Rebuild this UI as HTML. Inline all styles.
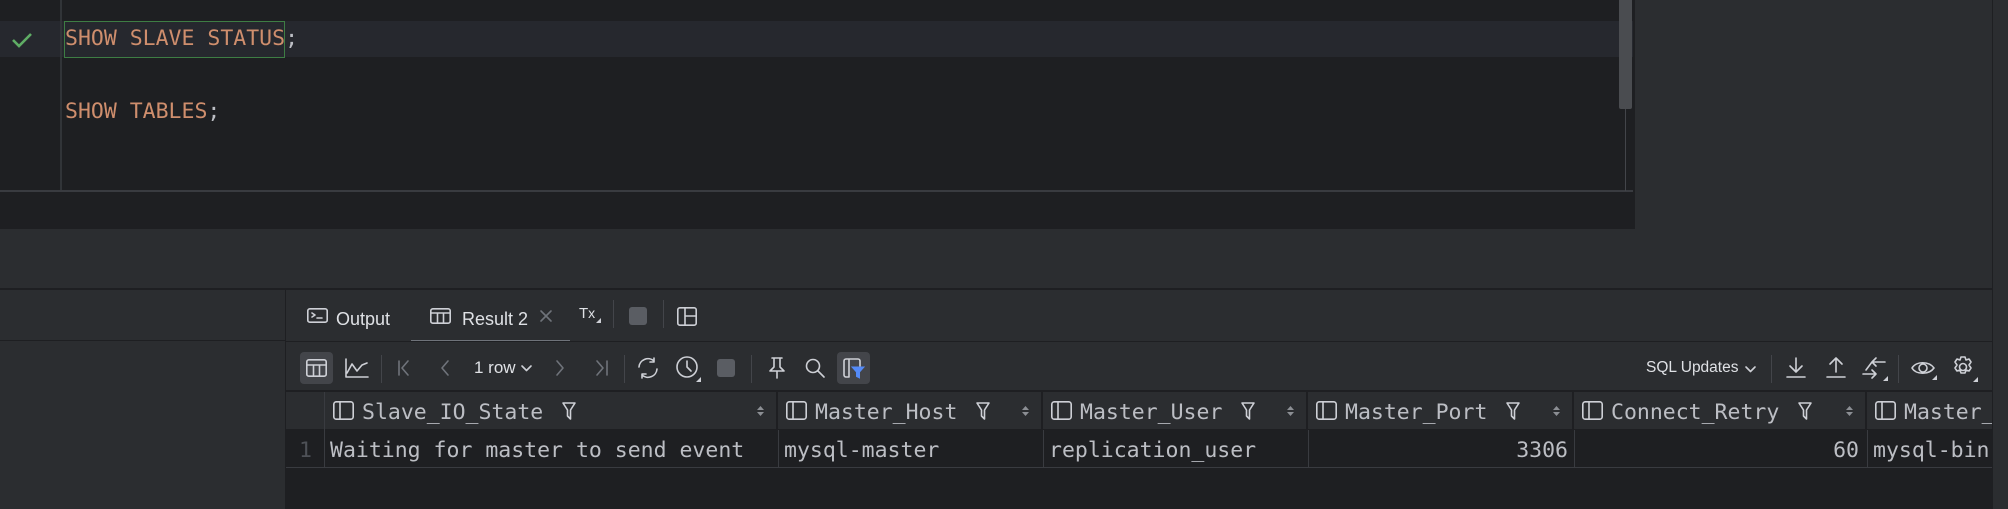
<!DOCTYPE html>
<html><head><meta charset="utf-8"><style>
*{margin:0;padding:0;box-sizing:border-box}
body{width:2008px;height:509px;background:#2b2d30;position:relative;overflow:hidden;font-family:"Liberation Sans",sans-serif}
.a{position:absolute}
.mono{font-family:"DejaVu Sans Mono","Liberation Mono",monospace;font-size:21.5px;white-space:pre;line-height:1}
.ui{font-size:18px;color:#dfe1e5;white-space:nowrap;line-height:1}
svg{position:absolute;overflow:visible}
.ic{stroke:#ced0d6;fill:none;stroke-width:1.6;stroke-linecap:round;stroke-linejoin:round}
.dim{stroke:#6f737a}
.sep{position:absolute;width:1px;background:#43454a}
.hd{position:absolute;top:392px;height:37px;border-right:2px solid #1e1f22}
.hd span{position:absolute;top:10px;left:37px;color:#bcbec4}
</style></head><body>
<!-- editor -->
<div class="a" style="left:0;top:0;width:1635px;height:229px;background:#1e1f22"></div>
<div class="a" style="left:0;top:21px;width:1633px;height:36px;background:#26282e"></div>
<div class="a" style="left:60px;top:0;width:2px;height:191px;background:#313438"></div>
<div class="a" style="left:0;top:190px;width:1633px;height:2px;background:#393b40"></div>
<div class="a" style="left:1625px;top:0;width:1px;height:191px;background:#43454a"></div>
<div class="a" style="left:1619px;top:0;width:13px;height:109px;background:#4a4c50;border-radius:0 0 2px 2px"></div>
<svg style="left:11px;top:32px" width="22" height="16"><path d="M2 8 L8 14 L20 2" stroke="#5fad65" stroke-width="2.6" fill="none"/></svg>
<div class="a" style="left:64px;top:21px;width:221px;height:37px;border:1.5px solid #3e7d44"></div>
<div class="a mono" style="left:65px;top:28px;color:#cf8e6d">SHOW SLAVE STATUS<span style="color:#bcbec4">;</span></div>
<div class="a mono" style="left:65px;top:101px;color:#cf8e6d">SHOW TABLES<span style="color:#bcbec4">;</span></div>
<!-- right panel -->
<div class="a" style="left:1635px;top:0;width:357px;height:227px;background:#2b2d30"></div>
<div class="a" style="left:1992px;top:0;width:1px;height:509px;background:#1e1f22"></div>
<!-- bottom band -->
<div class="a" style="left:0;top:229px;width:1992px;height:60px;background:#2b2d30"></div>
<div class="a" style="left:0;top:288px;width:1992px;height:2px;background:#1e1f22"></div>
<div class="a" style="left:285px;top:290px;width:1px;height:219px;background:#1e1f22"></div>
<div class="a" style="left:0;top:340px;width:285px;height:1px;background:#1e1f22"></div>
<!-- tabs -->
<svg style="left:307px;top:308px" width="21" height="15"><rect x="0.8" y="0.8" width="19.4" height="13.4" rx="2" class="ic"/><path d="M5 5l3 2-3 2M10 10h5" class="ic"/></svg>
<div class="a ui" style="left:336px;top:310px">Output</div>
<svg style="left:430px;top:308px" width="21" height="16"><rect x="0.8" y="0.8" width="19.4" height="14.4" rx="2" class="ic"/><path d="M1 5h19M7.5 5v10M13.5 5v10" class="ic"/></svg>
<div class="a ui" style="left:462px;top:310px">Result 2</div>
<svg style="left:540px;top:310px" width="12" height="12"><path d="M1 1l10 10M11 1L1 11" class="ic dim"/></svg>
<div class="a" style="left:411px;top:340px;width:159px;height:2px;background:#6f737a"></div>
<div class="a ui" style="left:579px;top:306px;font-size:15px">T<span style="font-size:14px">x</span></div>
<svg style="left:596px;top:318px" width="5" height="5"><path d="M5 0V5H0z" fill="#ced0d6"/></svg>
<div class="sep" style="left:613px;top:300px;height:28px"></div>
<div class="a" style="left:629px;top:307px;width:18px;height:18px;background:#5a5d63;border-radius:3px"></div>
<div class="sep" style="left:663px;top:300px;height:28px"></div>
<svg style="left:677px;top:307px" width="20" height="19"><rect x="0.8" y="0.8" width="18.4" height="17.4" rx="2" class="ic"/><path d="M8 1v17M8 9h11" class="ic"/></svg>
<!-- toolbar -->
<div class="a" style="left:286px;top:341px;width:1706px;height:1px;background:#1e1f22"></div>
<div class="a" style="left:300px;top:352px;width:33px;height:32px;background:#43454a;border-radius:4px"></div>
<svg style="left:306px;top:359px" width="21" height="18"><rect x="0.8" y="0.8" width="19.4" height="16.4" rx="2" class="ic"/><path d="M1 6h19M7.5 6v11M13.5 6v11" class="ic"/></svg>
<svg style="left:345px;top:358px" width="24" height="20"><path d="M1 1v18h22M2 15l5-9 5 7 5-6 5-2" class="ic"/></svg>
<div class="sep" style="left:381px;top:355px;height:28px"></div>
<svg style="left:398px;top:360px" width="12" height="16"><path d="M1 1v14M10 1L4 8l6 7" class="ic dim"/></svg>
<svg style="left:441px;top:360px" width="8" height="16"><path d="M7 1L1 8l6 7" class="ic dim"/></svg>
<div class="a ui" style="left:474px;top:359px;font-size:17px">1 row</div>
<svg style="left:521px;top:365px" width="11" height="7"><path d="M1 1l4.5 4.5L10 1" class="ic"/></svg>
<svg style="left:556px;top:360px" width="8" height="16"><path d="M1 1l6 7-6 7" class="ic dim"/></svg>
<svg style="left:596px;top:360px" width="12" height="16"><path d="M1 1l6 7-6 7M11 1v14" class="ic dim"/></svg>
<div class="sep" style="left:624px;top:355px;height:28px"></div>
<svg style="left:636px;top:357px" width="24" height="22"><path d="M3 10a9 9 0 0 1 15-6M21 12a9 9 0 0 1-15 6M18 1v4h-4M6 21v-4h4" class="ic"/></svg>
<svg style="left:676px;top:356px" width="26" height="26"><circle cx="11" cy="11" r="10" class="ic"/><path d="M11 5v6l4 4" class="ic"/><path d="M25 21v5h-5z" fill="#ced0d6"/></svg>
<div class="a" style="left:717px;top:359px;width:18px;height:18px;background:#5a5d63;border-radius:3px"></div>
<div class="sep" style="left:751px;top:355px;height:28px"></div>
<svg style="left:768px;top:357px" width="18" height="22"><path d="M4 1h10M6 1v9l-4 4h14l-4-4V1M9 14v7" class="ic"/></svg>
<svg style="left:805px;top:358px" width="20" height="20"><circle cx="8" cy="8" r="6.5" class="ic"/><path d="M13 13l6 6" class="ic"/></svg>
<div class="a" style="left:837px;top:352px;width:33px;height:32px;background:#43454a;border-radius:4px"></div>
<svg style="left:843px;top:358px" width="22" height="22"><path d="M6 1v18M1 3a2 2 0 0 1 2-2h12a2 2 0 0 1 2 2v5M1 3v14a2 2 0 0 0 2 2h3" class="ic"/><path d="M9 9h12l-4.5 5v6l-3-1.5v-4.5z" fill="#548af7" stroke="#548af7" stroke-width="1"/></svg>
<div class="a ui" style="left:1646px;top:360px;font-size:15.5px">SQL Updates</div>
<svg style="left:1745px;top:366px" width="11" height="7"><path d="M1 1l4.5 4.5L10 1" class="ic"/></svg>
<div class="sep" style="left:1771px;top:355px;height:28px"></div>
<svg style="left:1786px;top:357px" width="20" height="22"><path d="M10 1v14M4 9l6 6 6-6M1 20h18" class="ic"/></svg>
<svg style="left:1826px;top:357px" width="20" height="22"><path d="M10 15V1M4 7l6-6 6 6M1 20h18" class="ic"/></svg>
<svg style="left:1862px;top:356px" width="26" height="25"><path d="M23 6H10M14 2l-4 4 4 4M1 18h13M10 14l4 4-4 4M10 6L4 14" class="ic"/><path d="M26 20v5h-5z" fill="#ced0d6"/></svg>
<div class="sep" style="left:1898px;top:355px;height:28px"></div>
<svg style="left:1911px;top:358px" width="26" height="22"><path d="M1 10c4-7 17-7 22 0-5 7-18 7-22 0z" class="ic"/><circle cx="12" cy="10" r="4" class="ic"/><path d="M26 17v5h-5z" fill="#ced0d6"/></svg>
<svg style="left:1952px;top:356px" width="26" height="26"><circle cx="11" cy="11" r="3.5" class="ic"/><path d="M9 1h4l1 3 3-1 2 3-2 3 2 3-2 3-3-1-1 3H9l-1-3-3 1-2-3 2-3-2-3 2-3 3 1z" class="ic"/><path d="M26 21v5h-5z" fill="#ced0d6"/></svg>
<!-- table -->
<div class="a" style="left:286px;top:390px;width:1706px;height:2px;background:#1e1f22"></div>
<div class="a" style="left:286px;top:429px;width:1706px;height:80px;background:#1e1f22"></div>
<div class="a" style="left:286px;top:392px;width:39px;height:75px;border-right:1px solid #393b40"></div>
<div class="a" style="left:286px;top:467px;width:1706px;height:1px;background:#393b40"></div>

<div class="hd" style="left:325px;width:453px"><svg style="left:8px;top:9px" width="21" height="19"><rect x="0.8" y="0.8" width="19.4" height="17.4" rx="2.5" class="ic"/><path d="M7 1v17" class="ic"/></svg><span class="mono">Slave_IO_State</span><svg style="left:237px;top:10px" width="14" height="18"><path d="M1 1h12l-4.5 7v9l-3-3V8z" class="ic"/></svg><svg style="left:432px;top:14px" width="7" height="10"><path d="M0 4L3.5 0 7 4zM0 6l3.5 4L7 6z" fill="#8c8f94"/></svg></div>
<div class="hd" style="left:778px;width:265px"><svg style="left:8px;top:9px" width="21" height="19"><rect x="0.8" y="0.8" width="19.4" height="17.4" rx="2.5" class="ic"/><path d="M7 1v17" class="ic"/></svg><span class="mono">Master_Host</span><svg style="left:198px;top:10px" width="14" height="18"><path d="M1 1h12l-4.5 7v9l-3-3V8z" class="ic"/></svg><svg style="left:244px;top:14px" width="7" height="10"><path d="M0 4L3.5 0 7 4zM0 6l3.5 4L7 6z" fill="#8c8f94"/></svg></div>
<div class="hd" style="left:1043px;width:265px"><svg style="left:8px;top:9px" width="21" height="19"><rect x="0.8" y="0.8" width="19.4" height="17.4" rx="2.5" class="ic"/><path d="M7 1v17" class="ic"/></svg><span class="mono">Master_User</span><svg style="left:198px;top:10px" width="14" height="18"><path d="M1 1h12l-4.5 7v9l-3-3V8z" class="ic"/></svg><svg style="left:244px;top:14px" width="7" height="10"><path d="M0 4L3.5 0 7 4zM0 6l3.5 4L7 6z" fill="#8c8f94"/></svg></div>
<div class="hd" style="left:1308px;width:266px"><svg style="left:8px;top:9px" width="21" height="19"><rect x="0.8" y="0.8" width="19.4" height="17.4" rx="2.5" class="ic"/><path d="M7 1v17" class="ic"/></svg><span class="mono">Master_Port</span><svg style="left:198px;top:10px" width="14" height="18"><path d="M1 1h12l-4.5 7v9l-3-3V8z" class="ic"/></svg><svg style="left:245px;top:14px" width="7" height="10"><path d="M0 4L3.5 0 7 4zM0 6l3.5 4L7 6z" fill="#8c8f94"/></svg></div>
<div class="hd" style="left:1574px;width:293px"><svg style="left:8px;top:9px" width="21" height="19"><rect x="0.8" y="0.8" width="19.4" height="17.4" rx="2.5" class="ic"/><path d="M7 1v17" class="ic"/></svg><span class="mono">Connect_Retry</span><svg style="left:224px;top:10px" width="14" height="18"><path d="M1 1h12l-4.5 7v9l-3-3V8z" class="ic"/></svg><svg style="left:272px;top:14px" width="7" height="10"><path d="M0 4L3.5 0 7 4zM0 6l3.5 4L7 6z" fill="#8c8f94"/></svg></div>
<div class="hd" style="left:1867px;width:125px;border:none;overflow:hidden"><svg style="left:8px;top:9px" width="21" height="19"><rect x="0.8" y="0.8" width="19.4" height="17.4" rx="2.5" class="ic"/><path d="M7 1v17" class="ic"/></svg><span class="mono">Master_Log_File</span></div>

<div class="a mono" style="left:299px;top:440px;color:#4e5157">1</div>
<div class="a mono" style="left:330px;top:440px;color:#bcbec4">Waiting for master to send event</div>
<div class="a mono" style="left:784px;top:440px;color:#bcbec4">mysql-master</div>
<div class="a mono" style="left:1049px;top:440px;color:#bcbec4">replication_user</div>
<div class="a mono" style="left:1480px;top:440px;width:88px;text-align:right;color:#bcbec4">3306</div>
<div class="a mono" style="left:1800px;top:440px;width:59px;text-align:right;color:#bcbec4">60</div>
<div class="a mono" style="left:1873px;top:440px;width:119px;overflow:hidden;color:#bcbec4">mysql-bin.000</div>
<div class="a" style="left:778px;top:430px;width:1px;height:37px;background:#393b40"></div>
<div class="a" style="left:1043px;top:430px;width:1px;height:37px;background:#393b40"></div>
<div class="a" style="left:1308px;top:430px;width:1px;height:37px;background:#393b40"></div>
<div class="a" style="left:1574px;top:430px;width:1px;height:37px;background:#393b40"></div>
<div class="a" style="left:1867px;top:430px;width:1px;height:37px;background:#393b40"></div>
</body></html>
